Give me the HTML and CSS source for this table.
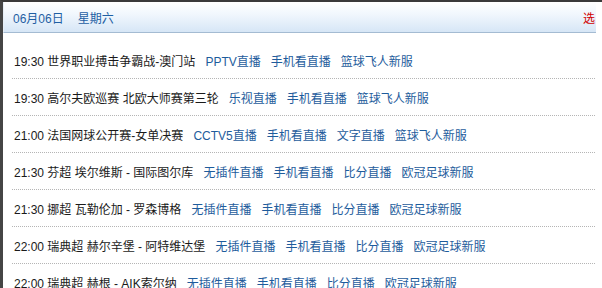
FILE: index.html
```html
<!DOCTYPE html>
<html>
<head>
<meta charset="utf-8">
<link rel="stylesheet" href="styles.css">
</head>
<body>
<div class="page">
  <div class="head">
    <span class="date">06月06日<span class="week">星期六</span></span>
    <span class="pick">选</span>
  </div>
  <ul class="list">
    <li><span class="ev">19:30 世界职业搏击争霸战-澳门站</span><a>PPTV直播</a><a>手机看直播</a><a>篮球飞人新服</a></li>
    <li><span class="ev">19:30 高尔夫欧巡赛 北欧大师赛第三轮</span><a>乐视直播</a><a>手机看直播</a><a>篮球飞人新服</a></li>
    <li><span class="ev">21:00 法国网球公开赛-女单决赛</span><a>CCTV5直播</a><a>手机看直播</a><a>文字直播</a><a>篮球飞人新服</a></li>
    <li><span class="ev">21:30 芬超 埃尔维斯 - 国际图尔库</span><a>无插件直播</a><a>手机看直播</a><a>比分直播</a><a>欧冠足球新服</a></li>
    <li><span class="ev">21:30 挪超 瓦勒伦加 - 罗森博格</span><a>无插件直播</a><a>手机看直播</a><a>比分直播</a><a>欧冠足球新服</a></li>
    <li><span class="ev">22:00 瑞典超 赫尔辛堡 - 阿特维达堡</span><a>无插件直播</a><a>手机看直播</a><a>比分直播</a><a>欧冠足球新服</a></li>
    <li><span class="ev">22:00 瑞典超 赫根 - AIK索尔纳</span><a>无插件直播</a><a>手机看直播</a><a>比分直播</a><a>欧冠足球新服</a></li>
  </ul>
</div>
</body>
</html>
```

FILE: styles.css
```css
html, body {
  margin: 0;
  padding: 0;
  background: #fff;
  overflow: hidden;
}
body {
  font-family: "Liberation Sans", "Noto Sans CJK SC", sans-serif;
  font-size: 12px;
  color: #1a1a1a;
}
.page {
  border-top: 2px solid #3a3a3a;
  border-left: 3px solid #454545;
  height: 300px;
}
.head {
  display: flex;
  justify-content: space-between;
  align-items: center;
  height: 30px;
  margin-right: 6px;
  padding: 0 1px 0 9px;
  background: linear-gradient(#ffffff 0%, #f1f7fd 40%, #d6e6f6 100%);
  border-bottom: 1px solid #a4bbd2;
  border-left: 1px solid #e6eef6;
}
.date {
  color: #1f5fa3;
  font-size: 12px;
}
.week {
  margin-left: 14px;
}
.pick {
  color: #d10000;
  font-size: 12px;
}
.list {
  list-style: none;
  margin: 9px 7px 0 9px;
  padding: 0;
}
.list li {
  display: flex;
  align-items: center;
  height: 36px;
  padding-left: 2px;
  border-bottom: 1px dotted #b5b5b5;
  white-space: nowrap;
}
.list a {
  color: #1e5c9c;
  margin-left: 10px;
  text-decoration: none;
}
.ev {
  color: #1a1a1a;
}
```
